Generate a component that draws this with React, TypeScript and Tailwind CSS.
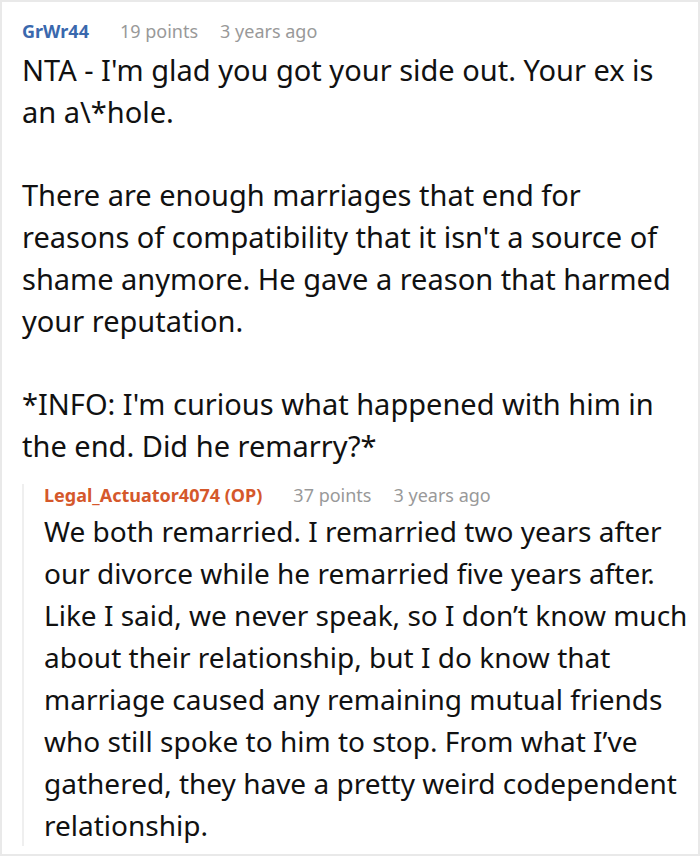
export default function App() {
    return (
        <div className="w-[700px] h-[856px] overflow-hidden bg-white border-2 border-[#e9e9e9] font-['Noto_Sans',sans-serif] text-[#111]">
            <div className="pl-[20px] pt-[17px]">
                <div className="flex items-center h-[24px] text-[18px]">
                    <span className="font-bold text-[#3a68ad]">GrWr44</span>
                    <span className="ml-[31px] text-[#999]">19 points</span>
                    <span className="ml-[22px] text-[#999]">3 years ago</span>
                </div>
                <div className="mt-[6px] pr-[20px] text-[29px] leading-[41.8px]">
                    <p className="mb-[41.8px]">NTA - I'm glad you got your side out. Your ex is an a\*hole.</p>
                    <p className="mb-[41.8px]">There are enough marriages that end for reasons of compatibility that it isn't a source of shame anymore. He gave a reason that harmed your reputation.</p>
                    <p>*INFO: I'm curious what happened with him in the end. Did he remarry?*</p>
                </div>

                <div className="mt-[17px] border-l-2 border-[#efefef] pl-[20px]">
                    <div className="flex items-center h-[24px] text-[18px]">
                        <span className="font-bold text-[#d5582b]">Legal_Actuator4074 (OP)</span>
                        <span className="ml-[31px] text-[#999]">37 points</span>
                        <span className="ml-[22px] text-[#999]">3 years ago</span>
                    </div>
                    <p className="mt-[2px] text-[28px] leading-[42px]">
                        We both remarried. I remarried two years after our divorce while he remarried five years after. Like I said, we never speak, so I don’t know much about their relationship, but I do know that marriage caused any remaining mutual friends who still spoke to him to stop. From what I’ve gathered, they have a pretty weird codependent relationship.
                    </p>
                </div>
            </div>
        </div>
    )
}
